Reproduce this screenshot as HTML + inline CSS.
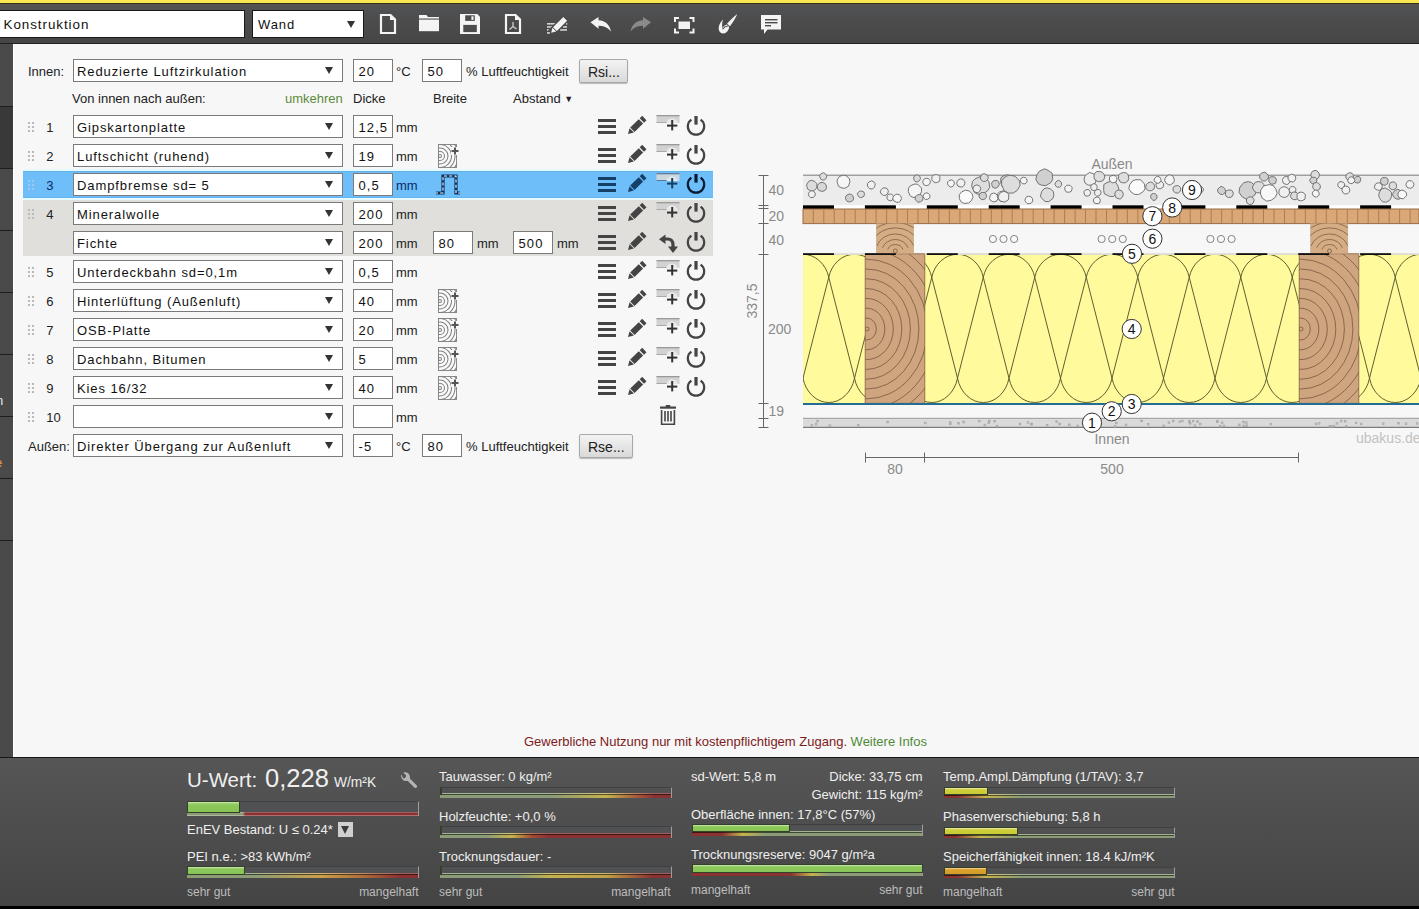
<!DOCTYPE html>
<html><head><meta charset="utf-8"><style>*{box-sizing:border-box}
html,body{margin:0;padding:0}
body{width:1419px;height:909px;overflow:hidden;position:relative;background:#f7f7f7;font-family:"Liberation Sans",sans-serif;font-size:13px;color:#222}
.a{position:absolute}
#yel{left:0;top:0;width:1419px;height:3px;background:#fae650}
#tb{left:0;top:3px;width:1419px;height:41px;background:linear-gradient(#56534f,#4f5053 18%,#4b4b4b 50%,#464646);border-top:1px solid #35321c;border-bottom:1px solid #202020}
#side{left:0;top:44px;width:13px;height:714px;background:#4a4a4a}
.sep{position:absolute;left:0;width:13px;height:1px;background:#1e1e1e}
#content{left:13px;top:44px;width:1406px;height:713px;background:#f7f7f7;border-left:1px solid #fff}
.sel{position:absolute;background:#fff;border:1px solid #7a7a7a;height:23px}
.v{position:absolute;left:3px;top:5px;font-size:13px;letter-spacing:0.9px;color:#111;white-space:nowrap;line-height:14px}
.ar{position:absolute;right:9px;top:7px;width:0;height:0;border-left:4px solid transparent;border-right:4px solid transparent;border-top:7px solid #333}
.inp{position:absolute;background:#fff;border:1px solid #7a7a7a;height:23px;width:40px}
.lbl{position:absolute;white-space:nowrap;line-height:14px;font-size:13px;color:#222}
.btn{position:absolute;height:24px;border:1px solid #a8a8a8;border-radius:2px;background:linear-gradient(#f3f3f3,#d9d9d9);box-shadow:0 1px 1px rgba(0,0,0,.25);font-size:14px;color:#222;line-height:24.5px;padding-left:8px;letter-spacing:0}
.num{position:absolute;font-size:13px;line-height:14px;color:#222}
.drag{position:absolute;left:28px;width:7px;height:11px}
#panel{left:0;top:757px;width:1419px;height:149px;background:linear-gradient(#565656,#444);border-top:1px solid #161616}
#pbot{left:0;top:906px;width:1419px;height:3px;background:#000}
.pt{position:absolute;white-space:nowrap;line-height:14px;font-size:13px;color:#f0f0f0}
.pg{position:absolute;white-space:nowrap;line-height:14px;font-size:12px;color:#bdbdbd}
.ico{position:absolute;overflow:visible}

.inp .v{left:4.5px;letter-spacing:1.1px}
</style></head><body><div id="yel" class="a"></div><div id="tb" class="a"></div><div id="side" class="a"></div><div class="a" style="left:0;top:107px;width:13px;height:61px;background:#393939"></div><div id="content" class="a"></div><div class="sep" style="top:106px"></div><div class="sep" style="top:168px"></div><div class="sep" style="top:230px"></div><div class="sep" style="top:292px"></div><div class="sep" style="top:354px"></div><div class="sep" style="top:416px"></div><div class="sep" style="top:478px"></div><div class="sep" style="top:540px"></div><div class="a" style="left:-4px;top:394px;font-size:13px;line-height:14px;color:#e6e6e6">n</div><div class="a" style="left:-5px;top:456px;font-size:13px;line-height:14px;color:#e39a5a">e</div><div class="a" style="left:-1px;top:10px;width:246px;height:28px;background:#fff;border:1px solid #1a1a1a"><div class="v" style="left:3.5px;top:7px;font-size:13.4px;letter-spacing:0.95px">Konstruktion</div></div><div class="a" style="left:252px;top:10px;width:112px;height:28px;background:#fff;border:1px solid #1a1a1a"><div class="v" style="left:5px;top:7px">Wand</div><div class="ar" style="right:8px;top:10px"></div></div><div class="lbl" style="left:28px;top:65px;">Innen:</div><div class="sel" style="left:73px;top:59px;width:270px;height:23px"><div class="v">Reduzierte Luftzirkulation</div><div class="ar"></div></div><div class="inp" style="left:353px;top:59px;width:40px"><div class="v">20</div></div><div class="lbl" style="left:396px;top:65px;">°C</div><div class="inp" style="left:422px;top:59px;width:40px"><div class="v">50</div></div><div class="lbl" style="left:466px;top:65px;">% Luftfeuchtigkeit</div><div class="btn" style="left:579px;top:59px;width:49px">Rsi...</div><div class="lbl" style="left:72px;top:92px;">Von innen nach außen:</div><div class="lbl" style="left:285px;top:92px;color:#5d8a3c">umkehren</div><div class="lbl" style="left:353px;top:92px;">Dicke</div><div class="lbl" style="left:433px;top:92px;">Breite</div><div class="lbl" style="left:513px;top:92px;">Abstand <span style="font-size:9px;position:relative;top:-1px">&#9660;</span></div><div class="a" style="left:23px;top:169px;width:690px;height:2px;background:#e4faff"></div><div class="a" style="left:23px;top:198px;width:690px;height:2px;background:#e4faff"></div><div class="a" style="left:23px;top:171px;width:690px;height:27px;background:#6dbef9;border-top:1px solid #64b0e6;border-bottom:1px solid #64b4ee"></div><div class="a" style="left:23px;top:200px;width:690px;height:56px;background:#e0dfdb"></div><svg class="drag" style="top:122px" width="7" height="11"><g fill="#bababa"><rect x="0" y="0" width="2" height="2"/><rect x="4" y="0" width="2" height="2"/><rect x="0" y="4" width="2" height="2"/><rect x="4" y="4" width="2" height="2"/><rect x="0" y="8" width="2" height="2"/><rect x="4" y="8" width="2" height="2"/></g></svg><div class="num" style="left:46.3px;top:121px;">1</div><div class="sel" style="left:73px;top:115px;width:270px;height:23px"><div class="v">Gipskartonplatte</div><div class="ar"></div></div><div class="inp" style="left:353px;top:115px;width:40px"><div class="v">12,5</div></div><div class="lbl" style="left:396px;top:121px;">mm</div><svg class="drag" style="top:151px" width="7" height="11"><g fill="#bababa"><rect x="0" y="0" width="2" height="2"/><rect x="4" y="0" width="2" height="2"/><rect x="0" y="4" width="2" height="2"/><rect x="4" y="4" width="2" height="2"/><rect x="0" y="8" width="2" height="2"/><rect x="4" y="8" width="2" height="2"/></g></svg><div class="num" style="left:46.3px;top:150px;">2</div><div class="sel" style="left:73px;top:144px;width:270px;height:23px"><div class="v">Luftschicht (ruhend)</div><div class="ar"></div></div><div class="inp" style="left:353px;top:144px;width:40px"><div class="v">19</div></div><div class="lbl" style="left:396px;top:150px;">mm</div><svg class="drag" style="top:180px" width="7" height="11"><g fill="#9cc9ee"><rect x="0" y="0" width="2" height="2"/><rect x="4" y="0" width="2" height="2"/><rect x="0" y="4" width="2" height="2"/><rect x="4" y="4" width="2" height="2"/><rect x="0" y="8" width="2" height="2"/><rect x="4" y="8" width="2" height="2"/></g></svg><div class="num" style="left:46.3px;top:179px;color:#0a2a6a">3</div><div class="sel" style="left:73px;top:173px;width:270px;height:23px"><div class="v">Dampfbremse sd= 5</div><div class="ar"></div></div><div class="inp" style="left:353px;top:173px;width:40px"><div class="v">0,5</div></div><div class="lbl" style="left:396px;top:179px;color:#0a2a6a">mm</div><svg class="drag" style="top:209px" width="7" height="11"><g fill="#bababa"><rect x="0" y="0" width="2" height="2"/><rect x="4" y="0" width="2" height="2"/><rect x="0" y="4" width="2" height="2"/><rect x="4" y="4" width="2" height="2"/><rect x="0" y="8" width="2" height="2"/><rect x="4" y="8" width="2" height="2"/></g></svg><div class="num" style="left:46.3px;top:208px;">4</div><div class="sel" style="left:73px;top:202px;width:270px;height:23px"><div class="v">Mineralwolle</div><div class="ar"></div></div><div class="inp" style="left:353px;top:202px;width:40px"><div class="v">200</div></div><div class="lbl" style="left:396px;top:208px;">mm</div><div class="sel" style="left:73px;top:231px;width:270px;height:23px"><div class="v">Fichte</div><div class="ar"></div></div><div class="inp" style="left:353px;top:231px;width:40px"><div class="v">200</div></div><div class="lbl" style="left:396px;top:237px;">mm</div><div class="inp" style="left:433px;top:231px;width:40px"><div class="v">80</div></div><div class="lbl" style="left:477px;top:237px;">mm</div><div class="inp" style="left:513px;top:231px;width:40px"><div class="v">500</div></div><div class="lbl" style="left:557px;top:237px;">mm</div><svg class="drag" style="top:267px" width="7" height="11"><g fill="#bababa"><rect x="0" y="0" width="2" height="2"/><rect x="4" y="0" width="2" height="2"/><rect x="0" y="4" width="2" height="2"/><rect x="4" y="4" width="2" height="2"/><rect x="0" y="8" width="2" height="2"/><rect x="4" y="8" width="2" height="2"/></g></svg><div class="num" style="left:46.3px;top:266px;">5</div><div class="sel" style="left:73px;top:260px;width:270px;height:23px"><div class="v">Unterdeckbahn sd=0,1m</div><div class="ar"></div></div><div class="inp" style="left:353px;top:260px;width:40px"><div class="v">0,5</div></div><div class="lbl" style="left:396px;top:266px;">mm</div><svg class="drag" style="top:296px" width="7" height="11"><g fill="#bababa"><rect x="0" y="0" width="2" height="2"/><rect x="4" y="0" width="2" height="2"/><rect x="0" y="4" width="2" height="2"/><rect x="4" y="4" width="2" height="2"/><rect x="0" y="8" width="2" height="2"/><rect x="4" y="8" width="2" height="2"/></g></svg><div class="num" style="left:46.3px;top:295px;">6</div><div class="sel" style="left:73px;top:289px;width:270px;height:23px"><div class="v">Hinterlüftung (Außenluft)</div><div class="ar"></div></div><div class="inp" style="left:353px;top:289px;width:40px"><div class="v">40</div></div><div class="lbl" style="left:396px;top:295px;">mm</div><svg class="drag" style="top:325px" width="7" height="11"><g fill="#bababa"><rect x="0" y="0" width="2" height="2"/><rect x="4" y="0" width="2" height="2"/><rect x="0" y="4" width="2" height="2"/><rect x="4" y="4" width="2" height="2"/><rect x="0" y="8" width="2" height="2"/><rect x="4" y="8" width="2" height="2"/></g></svg><div class="num" style="left:46.3px;top:324px;">7</div><div class="sel" style="left:73px;top:318px;width:270px;height:23px"><div class="v">OSB-Platte</div><div class="ar"></div></div><div class="inp" style="left:353px;top:318px;width:40px"><div class="v">20</div></div><div class="lbl" style="left:396px;top:324px;">mm</div><svg class="drag" style="top:354px" width="7" height="11"><g fill="#bababa"><rect x="0" y="0" width="2" height="2"/><rect x="4" y="0" width="2" height="2"/><rect x="0" y="4" width="2" height="2"/><rect x="4" y="4" width="2" height="2"/><rect x="0" y="8" width="2" height="2"/><rect x="4" y="8" width="2" height="2"/></g></svg><div class="num" style="left:46.3px;top:353px;">8</div><div class="sel" style="left:73px;top:347px;width:270px;height:23px"><div class="v">Dachbahn, Bitumen</div><div class="ar"></div></div><div class="inp" style="left:353px;top:347px;width:40px"><div class="v">5</div></div><div class="lbl" style="left:396px;top:353px;">mm</div><svg class="drag" style="top:383px" width="7" height="11"><g fill="#bababa"><rect x="0" y="0" width="2" height="2"/><rect x="4" y="0" width="2" height="2"/><rect x="0" y="4" width="2" height="2"/><rect x="4" y="4" width="2" height="2"/><rect x="0" y="8" width="2" height="2"/><rect x="4" y="8" width="2" height="2"/></g></svg><div class="num" style="left:46.3px;top:382px;">9</div><div class="sel" style="left:73px;top:376px;width:270px;height:23px"><div class="v">Kies 16/32</div><div class="ar"></div></div><div class="inp" style="left:353px;top:376px;width:40px"><div class="v">40</div></div><div class="lbl" style="left:396px;top:382px;">mm</div><svg class="drag" style="top:412px" width="7" height="11"><g fill="#bababa"><rect x="0" y="0" width="2" height="2"/><rect x="4" y="0" width="2" height="2"/><rect x="0" y="4" width="2" height="2"/><rect x="4" y="4" width="2" height="2"/><rect x="0" y="8" width="2" height="2"/><rect x="4" y="8" width="2" height="2"/></g></svg><div class="num" style="left:46.3px;top:411px;">10</div><div class="sel" style="left:73px;top:405px;width:270px;height:23px"><div class="v"></div><div class="ar"></div></div><div class="inp" style="left:353px;top:405px;width:40px"><div class="v"></div></div><div class="lbl" style="left:396px;top:411px;">mm</div><svg class="a" style="left:0;top:0" width="1419" height="909" viewBox="0 0 1419 909"><path d="M381,15 H390.5 L395,19.5 V33 H381 Z" fill="none" stroke="#f4f4f4" stroke-width="2.2" stroke-linejoin="miter"/><path d="M390,15 V20 H395 Z" fill="#f4f4f4"/><path d="M419,15 H426.5 L428,17 H439 V18.4 H419 Z" fill="#f4f4f4"/><rect x="419" y="19.6" width="20" height="11.6" fill="#f4f4f4"/><path d="M460,14 H477.3 L480,16.8 V34 H460 Z" fill="#f4f4f4"/><rect x="465.2" y="15.3" width="9.6" height="5.6" fill="#4b4b4b"/><rect x="471.4" y="16.3" width="2.1" height="3.6" fill="#f4f4f4"/><rect x="463.3" y="24.9" width="13.5" height="7.2" fill="#4b4b4b"/><path d="M506,15 H515.5 L520,19.5 V33 H506 Z" fill="none" stroke="#f4f4f4" stroke-width="2.2"/><path d="M515,15 V20 H520 Z" fill="#f4f4f4"/><path d="M513,22 V26.5 L509.5,29.5 M513,26.5 L516.5,29" fill="none" stroke="#cfcfcf" stroke-width="1.3"/><rect x="547" y="23.2" width="8" height="1.3" fill="#f4f4f4"/><rect x="547" y="26.299999999999997" width="5" height="1.3" fill="#f4f4f4"/><rect x="547" y="29.299999999999997" width="3.3" height="1.3" fill="#f4f4f4"/><rect x="547" y="32.3" width="3" height="1.3" fill="#f4f4f4"/><rect x="566" y="23.2" width="1.3" height="1.3" fill="#f4f4f4"/><rect x="563" y="26.299999999999997" width="4" height="1.3" fill="#f4f4f4"/><rect x="560" y="29.299999999999997" width="7" height="1.3" fill="#f4f4f4"/><g transform="translate(551.2,32.8) rotate(-45)"><rect x="-0.5" y="-4" width="21" height="8" fill="#4b4b4b"/><polygon points="0,0 4.4,-2.7 4.4,2.7" fill="#f4f4f4"/><rect x="5.3" y="-2.7" width="14.5" height="5.4" fill="#f4f4f4"/></g><path d="M590.5,22.2 L598.5,17 V20.3 C604.5,20.5 609.5,24 611.0,31.5 C607.5,27.5 603.5,25.8 598.5,25.8 V28.8 Z" fill="#f4f4f4"/><g transform="translate(1281.5,0) scale(-1,1)"><path d="M630.5,22.2 L638.5,17 V20.3 C644.5,20.5 649.5,24 651.0,31.5 C647.5,27.5 643.5,25.8 638.5,25.8 V28.8 Z" fill="#8a8a8a"/></g><rect x="678.5" y="21.5" width="11.5" height="7.5" fill="#f4f4f4"/><path d="M679,18.0 H675.0 V22" fill="none" stroke="#f4f4f4" stroke-width="2"/><path d="M689.5,18.0 H693.5 V22" fill="none" stroke="#f4f4f4" stroke-width="2"/><path d="M679,32.5 H675.0 V28.5" fill="none" stroke="#f4f4f4" stroke-width="2"/><path d="M689.5,32.5 H693.5 V28.5" fill="none" stroke="#f4f4f4" stroke-width="2"/><path d="M737.3,14 C735.5,18.5 732.5,22.5 730,26.3 L727,23.8 C730,20.5 733.5,17 737.3,14 Z" fill="#f4f4f4"/><path d="M723.2,19.5 C719.5,22.5 717.5,28 719.5,31.5 C721.5,34.5 726.5,34 728.5,29.5 C729.5,27.5 729,26.3 728,25.5 L726.5,24.5 C724,25.5 722.5,27.5 722.5,29 C722,25.5 721.8,22.5 723.2,19.5 Z" fill="#f4f4f4"/><path d="M722.6,29.2 C724,27.2 726,26.2 728.2,25.8" fill="none" stroke="#4a4a4a" stroke-width="1.1"/><path d="M761,15 H781 V29.5 H767.5 L764,34 V29.5 H761 Z" fill="#f4f4f4"/><rect x="765" y="19" width="12.5" height="1.4" fill="#4a4a4a"/><rect x="765" y="22" width="12.5" height="1.4" fill="#4a4a4a"/><rect x="765" y="25" width="6" height="1.4" fill="#4a4a4a"/><rect x="598" y="119" width="18" height="3" fill="#444"/><rect x="598" y="125" width="18" height="3" fill="#444"/><rect x="598" y="131" width="18" height="3" fill="#444"/><g transform="translate(628,134) rotate(-44.3)"><polygon points="0,0 5.2,-3.1 5.2,3.1" fill="#444"/><rect x="6.1" y="-3.1" width="12" height="6.2" fill="#444"/><rect x="19.4" y="-3.1" width="3.4" height="6.2" fill="#444"/></g><rect x="656.5" y="115" width="23" height="8" fill="#d2d2d2"/><rect x="656.5" y="115" width="23" height="1.3" fill="#9a9a9a"/><path d="M666.5,123 a5.5,4.5 0 0 1 11,0 z" fill="#e9e9e9"/><rect x="656.5" y="122" width="10" height="1" fill="#a8a8a8"/><rect x="667.0" y="124.6" width="10.3" height="2" fill="#333"/><rect x="671.2" y="120" width="2" height="10.4" fill="#333"/><path d="M700.59,119.70 A8.2,8.2 0 1 1 691.41,119.70" fill="none" stroke="#444" stroke-width="2.2"/><rect x="694.4" y="116.0" width="3.2" height="8.6" fill="#444"/><rect x="598" y="148" width="18" height="3" fill="#444"/><rect x="598" y="154" width="18" height="3" fill="#444"/><rect x="598" y="160" width="18" height="3" fill="#444"/><g transform="translate(628,163) rotate(-44.3)"><polygon points="0,0 5.2,-3.1 5.2,3.1" fill="#444"/><rect x="6.1" y="-3.1" width="12" height="6.2" fill="#444"/><rect x="19.4" y="-3.1" width="3.4" height="6.2" fill="#444"/></g><rect x="656.5" y="144" width="23" height="8" fill="#d2d2d2"/><rect x="656.5" y="144" width="23" height="1.3" fill="#9a9a9a"/><path d="M666.5,152 a5.5,4.5 0 0 1 11,0 z" fill="#e9e9e9"/><rect x="656.5" y="151" width="10" height="1" fill="#a8a8a8"/><rect x="667.0" y="153.6" width="10.3" height="2" fill="#333"/><rect x="671.2" y="149" width="2" height="10.4" fill="#333"/><path d="M700.59,148.70 A8.2,8.2 0 1 1 691.41,148.70" fill="none" stroke="#444" stroke-width="2.2"/><rect x="694.4" y="145.0" width="3.2" height="8.6" fill="#444"/><g><clipPath id="tc438144"><rect x="438" y="144" width="19" height="24"/></clipPath><rect x="438.5" y="144.5" width="18" height="23" fill="#fafafa" stroke="#8a8a8a" stroke-width="1"/><g clip-path="url(#tc438144)" fill="none" stroke="#808080" stroke-width="1.05"><circle cx="440" cy="156" r="1.5"/><circle cx="440" cy="156" r="4.5"/><circle cx="440" cy="156" r="8"/><circle cx="440" cy="156" r="11.5"/><circle cx="440" cy="156" r="15"/><circle cx="440" cy="156" r="18.5"/><circle cx="440" cy="156" r="22"/></g><rect x="451" y="147" width="8" height="8" fill="#f7f7f7"/><rect x="451.5" y="150" width="7" height="2" fill="#555"/><rect x="454" y="147.5" width="2" height="7" fill="#555"/></g><rect x="598" y="177" width="18" height="3" fill="#143f66"/><rect x="598" y="183" width="18" height="3" fill="#143f66"/><rect x="598" y="189" width="18" height="3" fill="#143f66"/><g transform="translate(628,192) rotate(-44.3)"><polygon points="0,0 5.2,-3.1 5.2,3.1" fill="#143f66"/><rect x="6.1" y="-3.1" width="12" height="6.2" fill="#143f66"/><rect x="19.4" y="-3.1" width="3.4" height="6.2" fill="#143f66"/></g><rect x="656.5" y="173" width="23" height="8" fill="#cdd6dc"/><rect x="656.5" y="173" width="23" height="1.3" fill="#5b7f9c"/><path d="M666.5,181 a5.5,4.5 0 0 1 11,0 z" fill="#dfe8ee"/><rect x="656.5" y="180" width="10" height="1" fill="#4d7fa6"/><rect x="667.0" y="182.6" width="10.3" height="2" fill="#1b3f60"/><rect x="671.2" y="178" width="2" height="10.4" fill="#1b3f60"/><path d="M700.59,177.70 A8.2,8.2 0 1 1 691.41,177.70" fill="none" stroke="#0a1a33" stroke-width="2.2"/><rect x="694.4" y="174.0" width="3.2" height="8.6" fill="#0a1a33"/><path d="M436,193 H443 V176 H456 V193 H460" fill="none" stroke="#0b3564" stroke-width="3.2"/><path d="M436,193 H443 V176 H456 V193 H460" fill="none" stroke="#f4fbff" stroke-width="1.1" stroke-dasharray="3 2.2" stroke-dashoffset="1"/><rect x="598" y="206" width="18" height="3" fill="#444"/><rect x="598" y="212" width="18" height="3" fill="#444"/><rect x="598" y="218" width="18" height="3" fill="#444"/><g transform="translate(628,221) rotate(-44.3)"><polygon points="0,0 5.2,-3.1 5.2,3.1" fill="#444"/><rect x="6.1" y="-3.1" width="12" height="6.2" fill="#444"/><rect x="19.4" y="-3.1" width="3.4" height="6.2" fill="#444"/></g><rect x="656.5" y="202" width="23" height="8" fill="#d2d2d2"/><rect x="656.5" y="202" width="23" height="1.3" fill="#9a9a9a"/><path d="M666.5,210 a5.5,4.5 0 0 1 11,0 z" fill="#e9e9e9"/><rect x="656.5" y="209" width="10" height="1" fill="#a8a8a8"/><rect x="667.0" y="211.6" width="10.3" height="2" fill="#333"/><rect x="671.2" y="207" width="2" height="10.4" fill="#333"/><path d="M700.59,206.70 A8.2,8.2 0 1 1 691.41,206.70" fill="none" stroke="#444" stroke-width="2.2"/><rect x="694.4" y="203.0" width="3.2" height="8.6" fill="#444"/><rect x="598" y="235" width="18" height="3" fill="#444"/><rect x="598" y="241" width="18" height="3" fill="#444"/><rect x="598" y="247" width="18" height="3" fill="#444"/><g transform="translate(628,250) rotate(-44.3)"><polygon points="0,0 5.2,-3.1 5.2,3.1" fill="#444"/><rect x="6.1" y="-3.1" width="12" height="6.2" fill="#444"/><rect x="19.4" y="-3.1" width="3.4" height="6.2" fill="#444"/></g><path d="M665,239 H667.5 Q673,239 673,245 V248" fill="none" stroke="#444" stroke-width="3.2"/><polygon points="659,239.2 665.5,234.5 665.5,244" fill="#444"/><polygon points="668,246.5 678,246.5 673,253" fill="#444"/><path d="M700.59,235.70 A8.2,8.2 0 1 1 691.41,235.70" fill="none" stroke="#444" stroke-width="2.2"/><rect x="694.4" y="232.0" width="3.2" height="8.6" fill="#444"/><rect x="598" y="264" width="18" height="3" fill="#444"/><rect x="598" y="270" width="18" height="3" fill="#444"/><rect x="598" y="276" width="18" height="3" fill="#444"/><g transform="translate(628,279) rotate(-44.3)"><polygon points="0,0 5.2,-3.1 5.2,3.1" fill="#444"/><rect x="6.1" y="-3.1" width="12" height="6.2" fill="#444"/><rect x="19.4" y="-3.1" width="3.4" height="6.2" fill="#444"/></g><rect x="656.5" y="260" width="23" height="8" fill="#d2d2d2"/><rect x="656.5" y="260" width="23" height="1.3" fill="#9a9a9a"/><path d="M666.5,268 a5.5,4.5 0 0 1 11,0 z" fill="#e9e9e9"/><rect x="656.5" y="267" width="10" height="1" fill="#a8a8a8"/><rect x="667.0" y="269.6" width="10.3" height="2" fill="#333"/><rect x="671.2" y="265" width="2" height="10.4" fill="#333"/><path d="M700.59,264.70 A8.2,8.2 0 1 1 691.41,264.70" fill="none" stroke="#444" stroke-width="2.2"/><rect x="694.4" y="261.0" width="3.2" height="8.6" fill="#444"/><rect x="598" y="293" width="18" height="3" fill="#444"/><rect x="598" y="299" width="18" height="3" fill="#444"/><rect x="598" y="305" width="18" height="3" fill="#444"/><g transform="translate(628,308) rotate(-44.3)"><polygon points="0,0 5.2,-3.1 5.2,3.1" fill="#444"/><rect x="6.1" y="-3.1" width="12" height="6.2" fill="#444"/><rect x="19.4" y="-3.1" width="3.4" height="6.2" fill="#444"/></g><rect x="656.5" y="289" width="23" height="8" fill="#d2d2d2"/><rect x="656.5" y="289" width="23" height="1.3" fill="#9a9a9a"/><path d="M666.5,297 a5.5,4.5 0 0 1 11,0 z" fill="#e9e9e9"/><rect x="656.5" y="296" width="10" height="1" fill="#a8a8a8"/><rect x="667.0" y="298.6" width="10.3" height="2" fill="#333"/><rect x="671.2" y="294" width="2" height="10.4" fill="#333"/><path d="M700.59,293.70 A8.2,8.2 0 1 1 691.41,293.70" fill="none" stroke="#444" stroke-width="2.2"/><rect x="694.4" y="290.0" width="3.2" height="8.6" fill="#444"/><g><clipPath id="tc438289"><rect x="438" y="289" width="19" height="24"/></clipPath><rect x="438.5" y="289.5" width="18" height="23" fill="#fafafa" stroke="#8a8a8a" stroke-width="1"/><g clip-path="url(#tc438289)" fill="none" stroke="#808080" stroke-width="1.05"><circle cx="440" cy="301" r="1.5"/><circle cx="440" cy="301" r="4.5"/><circle cx="440" cy="301" r="8"/><circle cx="440" cy="301" r="11.5"/><circle cx="440" cy="301" r="15"/><circle cx="440" cy="301" r="18.5"/><circle cx="440" cy="301" r="22"/></g><rect x="451" y="292" width="8" height="8" fill="#f7f7f7"/><rect x="451.5" y="295" width="7" height="2" fill="#555"/><rect x="454" y="292.5" width="2" height="7" fill="#555"/></g><rect x="598" y="322" width="18" height="3" fill="#444"/><rect x="598" y="328" width="18" height="3" fill="#444"/><rect x="598" y="334" width="18" height="3" fill="#444"/><g transform="translate(628,337) rotate(-44.3)"><polygon points="0,0 5.2,-3.1 5.2,3.1" fill="#444"/><rect x="6.1" y="-3.1" width="12" height="6.2" fill="#444"/><rect x="19.4" y="-3.1" width="3.4" height="6.2" fill="#444"/></g><rect x="656.5" y="318" width="23" height="8" fill="#d2d2d2"/><rect x="656.5" y="318" width="23" height="1.3" fill="#9a9a9a"/><path d="M666.5,326 a5.5,4.5 0 0 1 11,0 z" fill="#e9e9e9"/><rect x="656.5" y="325" width="10" height="1" fill="#a8a8a8"/><rect x="667.0" y="327.6" width="10.3" height="2" fill="#333"/><rect x="671.2" y="323" width="2" height="10.4" fill="#333"/><path d="M700.59,322.70 A8.2,8.2 0 1 1 691.41,322.70" fill="none" stroke="#444" stroke-width="2.2"/><rect x="694.4" y="319.0" width="3.2" height="8.6" fill="#444"/><g><clipPath id="tc438318"><rect x="438" y="318" width="19" height="24"/></clipPath><rect x="438.5" y="318.5" width="18" height="23" fill="#fafafa" stroke="#8a8a8a" stroke-width="1"/><g clip-path="url(#tc438318)" fill="none" stroke="#808080" stroke-width="1.05"><circle cx="440" cy="330" r="1.5"/><circle cx="440" cy="330" r="4.5"/><circle cx="440" cy="330" r="8"/><circle cx="440" cy="330" r="11.5"/><circle cx="440" cy="330" r="15"/><circle cx="440" cy="330" r="18.5"/><circle cx="440" cy="330" r="22"/></g><rect x="451" y="321" width="8" height="8" fill="#f7f7f7"/><rect x="451.5" y="324" width="7" height="2" fill="#555"/><rect x="454" y="321.5" width="2" height="7" fill="#555"/></g><rect x="598" y="351" width="18" height="3" fill="#444"/><rect x="598" y="357" width="18" height="3" fill="#444"/><rect x="598" y="363" width="18" height="3" fill="#444"/><g transform="translate(628,366) rotate(-44.3)"><polygon points="0,0 5.2,-3.1 5.2,3.1" fill="#444"/><rect x="6.1" y="-3.1" width="12" height="6.2" fill="#444"/><rect x="19.4" y="-3.1" width="3.4" height="6.2" fill="#444"/></g><rect x="656.5" y="347" width="23" height="8" fill="#d2d2d2"/><rect x="656.5" y="347" width="23" height="1.3" fill="#9a9a9a"/><path d="M666.5,355 a5.5,4.5 0 0 1 11,0 z" fill="#e9e9e9"/><rect x="656.5" y="354" width="10" height="1" fill="#a8a8a8"/><rect x="667.0" y="356.6" width="10.3" height="2" fill="#333"/><rect x="671.2" y="352" width="2" height="10.4" fill="#333"/><path d="M700.59,351.70 A8.2,8.2 0 1 1 691.41,351.70" fill="none" stroke="#444" stroke-width="2.2"/><rect x="694.4" y="348.0" width="3.2" height="8.6" fill="#444"/><g><clipPath id="tc438347"><rect x="438" y="347" width="19" height="24"/></clipPath><rect x="438.5" y="347.5" width="18" height="23" fill="#fafafa" stroke="#8a8a8a" stroke-width="1"/><g clip-path="url(#tc438347)" fill="none" stroke="#808080" stroke-width="1.05"><circle cx="440" cy="359" r="1.5"/><circle cx="440" cy="359" r="4.5"/><circle cx="440" cy="359" r="8"/><circle cx="440" cy="359" r="11.5"/><circle cx="440" cy="359" r="15"/><circle cx="440" cy="359" r="18.5"/><circle cx="440" cy="359" r="22"/></g><rect x="451" y="350" width="8" height="8" fill="#f7f7f7"/><rect x="451.5" y="353" width="7" height="2" fill="#555"/><rect x="454" y="350.5" width="2" height="7" fill="#555"/></g><rect x="598" y="380" width="18" height="3" fill="#444"/><rect x="598" y="386" width="18" height="3" fill="#444"/><rect x="598" y="392" width="18" height="3" fill="#444"/><g transform="translate(628,395) rotate(-44.3)"><polygon points="0,0 5.2,-3.1 5.2,3.1" fill="#444"/><rect x="6.1" y="-3.1" width="12" height="6.2" fill="#444"/><rect x="19.4" y="-3.1" width="3.4" height="6.2" fill="#444"/></g><rect x="656.5" y="376" width="23" height="8" fill="#d2d2d2"/><rect x="656.5" y="376" width="23" height="1.3" fill="#9a9a9a"/><path d="M666.5,384 a5.5,4.5 0 0 1 11,0 z" fill="#e9e9e9"/><rect x="656.5" y="383" width="10" height="1" fill="#a8a8a8"/><rect x="667.0" y="385.6" width="10.3" height="2" fill="#333"/><rect x="671.2" y="381" width="2" height="10.4" fill="#333"/><path d="M700.59,380.70 A8.2,8.2 0 1 1 691.41,380.70" fill="none" stroke="#444" stroke-width="2.2"/><rect x="694.4" y="377.0" width="3.2" height="8.6" fill="#444"/><g><clipPath id="tc438376"><rect x="438" y="376" width="19" height="24"/></clipPath><rect x="438.5" y="376.5" width="18" height="23" fill="#fafafa" stroke="#8a8a8a" stroke-width="1"/><g clip-path="url(#tc438376)" fill="none" stroke="#808080" stroke-width="1.05"><circle cx="440" cy="388" r="1.5"/><circle cx="440" cy="388" r="4.5"/><circle cx="440" cy="388" r="8"/><circle cx="440" cy="388" r="11.5"/><circle cx="440" cy="388" r="15"/><circle cx="440" cy="388" r="18.5"/><circle cx="440" cy="388" r="22"/></g><rect x="451" y="379" width="8" height="8" fill="#f7f7f7"/><rect x="451.5" y="382" width="7" height="2" fill="#555"/><rect x="454" y="379.5" width="2" height="7" fill="#555"/></g><rect x="660" y="406.5" width="16" height="2.2" fill="#444"/><rect x="665.5" y="405" width="5" height="2" rx="1" fill="#444"/><path d="M661.6,410 V424.2 H674.4 V410" fill="none" stroke="#444" stroke-width="1.6"/><rect x="664.2" y="411" width="1.6" height="10.5" fill="#444"/><rect x="667.2" y="411" width="1.6" height="10.5" fill="#444"/><rect x="670.2" y="411" width="1.6" height="10.5" fill="#444"/><rect x="803" y="175" width="616" height="30.5" fill="#ececec"/><rect x="803" y="174.6" width="616" height="1.2" fill="#8c8c8c"/><g stroke="#666" stroke-width="0.9"><polygon points="826.7,176.8 825.8,178.8 824.2,179.9 822.6,180.1 820.8,179.2 819.9,177.4 819.7,175.1 821.0,173.8 823.3,172.7 825.1,173.5 826.4,175.4" fill="#dcdcdc"/><polygon points="816.9,186.8 816.0,188.6 813.7,191.0 810.8,191.0 807.7,189.1 806.8,186.5 806.8,184.2 809.0,181.1 811.5,180.3 814.5,181.2 816.9,183.7" fill="#dcdcdc"/><polygon points="826.5,187.2 825.6,190.0 823.0,191.3 820.2,191.0 818.4,190.1 817.4,188.0 817.4,185.5 819.6,182.9 822.2,182.4 824.5,183.1 826.1,185.0" fill="#d8d8d8"/><polygon points="815.3,195.0 814.5,196.4 813.2,197.4 810.7,197.7 809.1,196.2 808.4,194.9 808.5,193.2 809.8,191.6 811.3,190.7 813.3,191.2 815.0,192.6" fill="#f0f0f0"/><polygon points="849.9,181.7 848.6,186.1 844.9,188.3 842.0,188.0 838.5,186.4 837.1,181.9 837.4,179.5 839.4,176.4 843.4,175.2 846.1,175.7 849.3,178.5" fill="#f6f6f6"/><polygon points="853.7,198.9 852.8,200.6 850.6,201.7 848.1,201.9 846.2,200.4 845.6,198.7 845.6,196.6 847.1,194.9 849.2,194.0 851.5,194.5 852.9,195.8" fill="#cfcfcf"/><polygon points="864.4,194.3 864.0,196.2 861.9,197.4 860.3,197.5 858.6,196.5 857.4,194.5 857.8,192.9 858.9,191.7 860.8,190.9 863.0,191.6 864.1,192.3" fill="#dedede"/><polygon points="875.0,185.5 874.1,187.4 872.5,189.0 869.9,188.8 868.6,187.7 867.4,186.0 867.6,183.4 869.1,181.9 871.5,180.9 873.7,181.7 875.1,183.6" fill="#f0f0f0"/><polygon points="888.3,191.8 887.3,193.9 886.0,195.1 883.6,195.5 881.2,193.9 880.3,191.8 881.1,189.7 882.1,188.6 884.0,187.8 886.7,188.2 888.1,190.2" fill="#eeeeee"/><polygon points="893.8,197.9 893.2,199.3 891.0,200.8 889.2,200.5 887.9,199.9 886.8,198.0 887.4,195.6 888.2,194.3 890.4,194.0 891.8,194.4 893.6,196.1" fill="#eeeeee"/><polygon points="901.6,198.5 900.1,201.4 898.6,202.3 896.5,202.2 893.7,200.8 892.8,199.0 893.1,196.6 895.2,194.7 896.9,194.2 899.2,194.5 900.8,196.3" fill="#f5f5f5"/><polygon points="920.5,178.4 919.6,180.4 917.9,181.8 916.0,181.8 914.3,180.6 913.7,178.8 913.9,177.0 914.6,175.6 916.6,174.9 918.9,175.5 919.9,176.7" fill="#dddddd"/><polygon points="930.3,182.5 929.6,184.1 927.8,185.4 925.3,185.5 923.6,184.5 922.8,182.2 923.1,180.4 924.4,178.8 926.4,178.3 928.5,178.6 930.1,180.5" fill="#f5f5f5"/><polygon points="939.9,179.6 939.3,181.5 936.8,182.5 935.2,182.7 933.2,181.6 931.8,179.7 932.0,176.6 933.2,175.2 936.0,174.6 938.6,175.1 939.8,176.4" fill="#f0f0f0"/><polygon points="921.5,191.6 919.6,196.1 917.3,197.2 912.9,197.4 910.1,195.7 908.3,191.6 908.5,188.1 910.3,185.8 914.8,184.0 917.8,184.3 921.5,188.2" fill="#f5f5f5"/><polygon points="922.9,198.4 922.5,200.5 920.4,201.8 918.1,202.3 916.1,200.6 915.1,199.3 915.4,196.6 916.7,195.4 919.2,194.4 920.9,194.6 922.8,196.7" fill="#d0d0d0"/><polygon points="930.1,196.2 929.5,198.1 927.5,199.3 925.5,199.6 924.2,198.4 923.2,196.6 923.4,195.1 924.4,193.6 926.3,192.8 928.4,193.4 929.5,194.7" fill="#f5f5f5"/><polygon points="954.3,183.8 953.7,185.5 951.9,186.9 950.3,187.0 948.3,185.5 947.5,183.8 947.6,182.0 949.0,180.6 951.1,179.8 952.8,180.3 954.3,182.1" fill="#f5f5f5"/><polygon points="964.9,183.4 964.2,185.2 962.6,186.9 960.1,186.9 958.0,186.2 956.7,183.3 957.2,181.6 958.5,179.7 960.5,178.9 963.0,179.2 964.8,181.7" fill="#f0f0f0"/><polygon points="973.0,197.2 971.2,200.9 968.6,203.0 964.0,203.4 961.1,201.8 959.4,198.7 959.3,194.7 961.6,191.9 965.4,190.2 969.5,191.0 972.3,194.2" fill="#fbfbfb"/><polygon points="989.7,187.3 987.4,191.1 982.1,194.0 977.7,194.2 974.5,192.6 971.7,186.3 972.4,181.6 975.0,178.8 980.4,176.5 986.0,178.3 989.0,181.9" fill="#dddddd"/><polygon points="988.3,178.3 987.3,179.8 985.8,181.2 983.6,181.6 981.3,180.2 980.3,178.1 980.9,176.1 982.3,174.1 984.2,173.7 986.4,174.5 987.8,176.2" fill="#dddddd"/><polygon points="980.7,188.8 979.7,191.3 977.9,192.7 975.9,192.4 973.9,191.4 972.9,189.1 973.5,187.1 974.5,185.7 977.1,184.9 978.9,185.6 980.1,186.7" fill="#eeeeee"/><polygon points="986.6,196.7 985.5,198.5 983.9,199.6 981.9,199.5 979.9,198.2 978.9,196.3 979.2,195.0 980.9,192.7 982.7,192.5 984.6,192.6 986.1,194.2" fill="#d0d0d0"/><polygon points="999.3,184.3 998.0,186.9 996.3,188.0 994.0,188.0 992.5,187.1 991.8,184.8 991.6,183.1 993.2,181.0 995.0,180.4 997.4,180.6 998.8,182.0" fill="#d0d0d0"/><polygon points="998.0,198.5 997.0,200.9 994.8,201.8 992.9,201.8 990.2,200.1 989.6,198.4 990.0,196.2 991.0,194.1 993.6,193.0 995.9,193.8 997.7,195.8" fill="#f5f5f5"/><polygon points="1008.5,196.6 1006.7,200.2 1004.2,201.7 1000.7,201.2 998.7,199.3 997.3,196.7 997.7,193.6 999.6,191.9 1003.2,190.9 1005.5,191.5 1007.7,193.4" fill="#eeeeee"/><polygon points="1013.7,182.9 1012.2,185.8 1009.1,187.8 1006.0,187.8 1002.2,186.5 1000.7,182.4 1000.9,177.7 1003.5,175.9 1006.6,174.8 1010.4,175.6 1013.0,178.0" fill="#d0d0d0"/><polygon points="1020.1,185.6 1017.1,190.5 1013.4,193.0 1008.3,193.1 1004.4,191.0 1001.5,184.6 1001.7,180.4 1006.1,176.3 1009.7,175.2 1015.1,176.2 1019.6,181.0" fill="#dddddd"/><polygon points="1008.7,197.9 1008.3,199.8 1004.8,202.1 1002.3,201.6 999.6,200.7 998.1,197.2 999.2,194.2 1000.4,192.8 1003.6,191.3 1007.1,192.4 1008.8,194.6" fill="#f0f0f0"/><polygon points="1027.1,180.9 1026.7,182.4 1025.0,183.9 1022.7,183.7 1021.4,182.9 1020.2,180.9 1020.6,179.5 1021.8,177.6 1023.5,177.2 1025.5,177.8 1026.7,178.9" fill="#f5f5f5"/><polygon points="1032.8,200.9 1031.6,202.8 1030.3,203.5 1027.4,203.7 1026.3,202.6 1024.9,200.6 1025.4,198.6 1026.8,196.5 1028.6,196.3 1030.8,196.6 1032.4,198.5" fill="#f5f5f5"/><polygon points="1052.8,179.3 1050.6,182.8 1045.9,185.6 1041.7,185.2 1038.4,183.8 1035.8,179.4 1037.1,174.4 1039.4,171.1 1044.6,168.8 1048.1,170.3 1052.1,173.2" fill="#d0d0d0"/><polygon points="1053.9,194.8 1053.0,198.3 1048.9,201.6 1045.1,201.5 1041.9,198.5 1040.4,196.3 1041.6,191.7 1043.9,188.8 1047.1,187.9 1050.3,188.9 1053.3,191.4" fill="#dddddd"/><polygon points="1061.7,184.7 1060.8,186.3 1059.7,187.3 1057.3,187.1 1056.2,186.5 1055.0,184.6 1055.3,182.8 1057.0,181.0 1058.4,180.3 1060.4,181.3 1061.2,182.2" fill="#dddddd"/><polygon points="1071.9,189.5 1071.2,191.4 1069.6,192.1 1067.0,192.2 1065.7,191.4 1064.9,189.4 1064.7,187.6 1066.6,185.4 1068.7,185.2 1070.1,185.4 1072.1,187.4" fill="#f5f5f5"/><polygon points="1096.4,179.6 1095.3,183.0 1091.5,185.0 1088.1,185.2 1085.1,183.0 1084.1,179.8 1084.5,176.8 1087.3,173.8 1089.7,172.5 1093.1,173.7 1095.7,175.6" fill="#eeeeee"/><polygon points="1104.9,177.0 1103.2,180.6 1101.0,181.3 1098.3,181.8 1095.0,179.9 1094.0,177.7 1094.2,174.2 1096.4,171.6 1099.3,171.4 1102.3,172.3 1104.0,174.3" fill="#dddddd"/><polygon points="1097.2,187.8 1096.7,189.2 1095.4,190.5 1093.0,190.4 1091.4,189.7 1090.7,187.7 1090.9,185.6 1092.5,184.3 1093.9,183.6 1096.1,184.3 1096.8,185.4" fill="#eeeeee"/><polygon points="1090.6,192.9 1089.7,195.3 1088.0,196.1 1086.1,196.0 1084.8,195.3 1084.0,193.0 1084.1,191.3 1085.2,190.1 1086.9,189.5 1088.9,189.7 1090.3,191.5" fill="#f0f0f0"/><polygon points="1101.1,192.8 1100.1,195.0 1098.8,195.9 1096.5,196.1 1095.5,195.2 1094.3,193.4 1094.8,191.4 1095.5,190.1 1097.6,189.5 1099.5,189.6 1100.7,191.2" fill="#eeeeee"/><polygon points="1100.3,200.8 1099.5,203.1 1098.0,203.6 1095.8,203.6 1094.5,203.2 1093.4,201.1 1093.6,199.1 1095.0,197.8 1096.4,197.1 1098.9,197.5 1099.9,198.7" fill="#f5f5f5"/><polygon points="1118.8,189.4 1117.3,193.1 1113.4,196.6 1109.7,196.4 1104.4,193.8 1103.7,190.5 1103.8,184.6 1106.9,182.6 1111.7,181.0 1115.8,182.4 1118.0,186.0" fill="#dddddd"/><polygon points="1116.9,179.7 1116.4,181.5 1114.0,182.7 1112.4,182.8 1110.3,181.6 1109.5,180.0 1109.5,177.1 1110.6,176.0 1113.4,175.3 1115.4,176.0 1116.8,177.4" fill="#f5f5f5"/><polygon points="1128.8,178.4 1127.8,181.0 1125.3,182.8 1122.3,182.8 1120.0,181.7 1118.5,178.4 1118.6,175.0 1120.7,173.3 1123.5,172.5 1126.0,172.8 1128.2,174.8" fill="#dddddd"/><polygon points="1123.2,195.1 1122.2,197.4 1120.2,199.0 1118.0,198.6 1115.9,197.5 1114.9,194.8 1115.0,192.4 1116.8,190.7 1118.7,190.0 1121.5,190.6 1123.1,193.2" fill="#dddddd"/><polygon points="1145.0,188.8 1143.3,191.5 1138.7,194.5 1134.2,194.3 1130.9,191.8 1128.8,188.5 1129.7,184.7 1132.7,180.8 1135.9,179.7 1140.6,179.8 1144.5,184.0" fill="#fbfbfb"/><polygon points="1154.8,186.7 1153.9,189.0 1151.4,190.7 1148.6,190.7 1146.7,189.5 1145.7,187.7 1146.3,184.6 1148.1,182.8 1150.7,182.1 1152.5,182.5 1154.0,184.6" fill="#dddddd"/><polygon points="1157.1,197.4 1156.3,199.1 1154.9,200.3 1152.9,200.2 1151.6,199.1 1150.7,197.7 1150.8,195.4 1151.9,193.8 1153.5,193.5 1155.7,194.1 1156.7,195.0" fill="#d0d0d0"/><polygon points="1163.7,185.1 1163.0,187.3 1160.8,188.6 1158.6,188.7 1157.0,188.0 1156.1,185.8 1156.0,183.8 1157.9,181.4 1159.6,181.2 1161.5,181.4 1163.3,183.4" fill="#eeeeee"/><polygon points="1161.0,180.3 1160.0,182.3 1158.9,183.2 1157.1,183.2 1155.2,182.1 1154.2,180.7 1154.3,178.8 1156.1,176.9 1157.3,176.3 1159.4,176.8 1160.7,178.6" fill="#f5f5f5"/><polygon points="1174.3,180.2 1173.8,182.6 1170.7,184.7 1168.8,184.9 1165.7,182.8 1164.7,180.3 1165.1,178.2 1166.7,176.1 1169.2,174.8 1172.4,175.6 1173.9,178.0" fill="#f5f5f5"/><polygon points="1180.7,189.9 1179.6,192.1 1178.2,193.1 1175.4,192.9 1173.8,191.6 1173.1,190.2 1173.1,187.5 1174.9,186.1 1177.1,185.6 1178.7,185.8 1180.5,187.8" fill="#dddddd"/><polygon points="1225.7,191.2 1224.8,193.1 1222.6,194.5 1220.6,194.4 1218.7,193.0 1217.7,191.4 1217.7,189.3 1219.3,187.6 1221.1,186.4 1223.4,187.2 1224.7,188.5" fill="#d0d0d0"/><polygon points="1233.2,194.3 1232.3,196.3 1230.9,197.2 1228.4,197.6 1226.0,196.1 1225.4,194.7 1225.7,191.6 1226.9,190.7 1228.9,189.9 1231.7,190.3 1233.0,192.0" fill="#dddddd"/><polygon points="1256.3,191.9 1254.7,195.2 1249.8,198.8 1245.9,199.0 1242.2,196.9 1239.0,192.4 1239.8,187.3 1243.8,182.6 1248.4,181.6 1251.5,182.6 1256.0,186.4" fill="#d0d0d0"/><polygon points="1264.6,187.9 1262.9,191.1 1259.8,192.9 1256.7,192.7 1254.9,191.7 1252.4,188.0 1253.0,185.7 1255.2,182.3 1258.0,181.6 1261.6,182.1 1264.0,184.4" fill="#dddddd"/><polygon points="1254.0,200.8 1253.1,203.2 1251.8,204.2 1249.5,204.5 1247.1,203.1 1246.4,201.0 1246.6,199.0 1248.4,197.2 1250.5,196.8 1252.0,197.1 1253.9,199.2" fill="#dddddd"/><polygon points="1268.6,177.0 1267.5,179.2 1265.3,181.0 1262.5,180.8 1260.9,179.6 1259.5,177.7 1259.9,174.6 1261.3,173.2 1264.2,172.2 1265.9,172.7 1268.0,175.1" fill="#d0d0d0"/><polygon points="1276.3,180.6 1275.5,183.2 1273.9,183.9 1271.7,184.2 1269.7,182.9 1268.8,181.2 1269.0,178.4 1269.9,177.2 1272.0,176.6 1275.0,177.2 1276.1,178.9" fill="#d0d0d0"/><polygon points="1277.2,193.2 1275.3,197.3 1271.3,200.2 1266.6,201.2 1262.2,198.1 1260.5,193.9 1260.7,190.1 1263.8,185.8 1269.4,184.6 1273.3,185.6 1275.9,189.2" fill="#f8f8f8"/><polygon points="1289.6,193.0 1288.1,195.8 1285.3,197.4 1282.5,197.1 1280.2,195.8 1278.9,193.4 1279.2,189.4 1281.3,187.6 1283.9,186.6 1287.0,187.6 1289.3,189.8" fill="#f0f0f0"/><polygon points="1290.4,180.6 1289.2,183.1 1287.6,184.4 1285.8,184.3 1283.6,183.4 1282.5,180.6 1282.6,179.2 1284.2,177.0 1286.3,176.4 1288.7,177.2 1290.1,178.5" fill="#f0f0f0"/><polygon points="1295.8,178.3 1295.0,180.6 1293.4,181.9 1290.9,181.7 1289.1,180.8 1288.1,179.2 1288.1,176.6 1289.6,175.0 1291.5,174.1 1294.2,175.0 1295.3,176.1" fill="#f0f0f0"/><polygon points="1295.9,190.0 1295.5,191.7 1293.4,193.1 1291.7,193.0 1290.1,192.3 1289.2,190.4 1289.5,188.0 1290.7,186.9 1292.6,186.4 1294.6,187.0 1295.7,188.5" fill="#eeeeee"/><polygon points="1298.3,196.3 1297.4,198.3 1296.2,199.6 1293.7,199.6 1291.7,198.7 1290.6,196.6 1291.0,194.2 1292.6,192.3 1294.0,191.9 1297.0,192.7 1298.0,193.8" fill="#dddddd"/><polygon points="1305.2,197.3 1305.0,199.1 1302.2,200.7 1300.4,200.8 1297.9,199.9 1297.0,197.4 1297.1,194.4 1298.2,193.0 1301.1,192.0 1303.7,192.8 1305.4,194.9" fill="#f0f0f0"/><polygon points="1319.5,175.2 1318.5,177.9 1316.4,179.4 1313.8,179.1 1312.1,178.0 1310.9,175.7 1311.1,173.3 1312.5,171.3 1315.0,170.4 1316.9,170.8 1319.0,173.1" fill="#dddddd"/><polygon points="1316.9,181.0 1316.1,182.5 1314.0,183.6 1312.4,183.7 1311.1,183.0 1309.8,180.8 1310.0,179.1 1311.5,177.5 1313.7,177.2 1315.4,177.5 1316.6,178.7" fill="#d0d0d0"/><polygon points="1320.4,187.0 1319.6,189.2 1317.9,190.2 1315.5,190.4 1313.5,188.9 1312.6,186.9 1313.0,185.1 1314.2,183.1 1316.6,182.5 1318.4,183.3 1320.0,184.7" fill="#dddddd"/><polygon points="1319.3,194.2 1318.7,195.5 1316.5,197.0 1315.3,196.9 1313.6,196.1 1312.3,193.8 1312.6,192.1 1314.2,190.5 1315.8,190.1 1317.8,190.7 1318.8,192.3" fill="#f5f5f5"/><polygon points="1353.5,177.2 1352.4,179.2 1351.1,180.0 1348.3,180.5 1346.7,179.1 1345.7,176.9 1346.2,175.0 1347.4,173.5 1349.5,172.7 1352.0,173.2 1353.1,174.5" fill="#dddddd"/><polygon points="1360.7,179.7 1359.9,182.1 1358.1,183.0 1356.9,183.0 1354.7,182.1 1354.0,179.8 1354.4,178.5 1355.7,176.9 1357.1,176.5 1358.9,176.5 1360.5,177.8" fill="#d0d0d0"/><polygon points="1354.9,180.5 1354.0,182.2 1352.1,183.6 1350.2,183.5 1348.9,183.0 1347.7,180.8 1348.4,178.9 1349.4,177.4 1351.2,176.8 1353.0,177.2 1354.3,179.2" fill="#f5f5f5"/><polygon points="1344.7,185.0 1343.5,187.3 1342.4,188.3 1340.5,188.5 1338.8,187.2 1337.8,185.7 1338.0,183.7 1339.0,182.2 1341.0,181.5 1343.1,182.2 1344.4,183.4" fill="#eeeeee"/><polygon points="1349.8,190.9 1348.8,192.5 1347.6,193.8 1344.6,193.9 1343.1,192.8 1341.8,190.2 1342.4,188.4 1343.6,186.6 1345.7,186.0 1348.1,186.6 1349.5,188.6" fill="#f0f0f0"/><polygon points="1388.2,181.2 1387.5,183.7 1385.3,185.2 1383.8,185.2 1381.1,183.7 1380.6,181.7 1380.8,179.3 1382.3,177.7 1384.2,177.5 1386.6,177.8 1387.9,179.2" fill="#d0d0d0"/><polygon points="1396.6,186.7 1395.9,188.4 1394.1,189.4 1392.1,189.8 1389.8,188.2 1389.0,186.9 1389.5,184.1 1390.7,182.3 1393.2,181.9 1395.0,182.4 1396.2,183.9" fill="#dddddd"/><polygon points="1382.3,186.8 1381.4,189.0 1379.6,190.3 1377.6,190.2 1375.1,188.8 1374.4,187.6 1375.0,184.9 1376.2,183.4 1378.3,182.9 1380.1,182.8 1382.0,185.2" fill="#f0f0f0"/><polygon points="1391.8,196.0 1390.1,199.8 1386.6,202.1 1382.7,201.9 1380.7,199.7 1378.8,196.6 1379.0,193.1 1381.3,189.1 1385.0,187.9 1389.2,190.0 1391.4,192.3" fill="#dddddd"/><polygon points="1402.8,194.5 1401.6,197.2 1399.0,199.3 1396.1,198.9 1394.1,197.5 1392.4,194.5 1393.2,192.8 1394.7,190.5 1398.0,189.2 1400.4,190.6 1402.3,192.5" fill="#d0d0d0"/><polygon points="1406.8,195.1 1405.7,196.6 1403.3,198.8 1400.9,198.4 1398.7,197.3 1398.0,195.4 1398.2,192.9 1399.8,190.8 1401.8,190.1 1404.5,190.9 1406.1,192.7" fill="#fbfbfb"/><polygon points="1414.0,184.3 1413.2,186.7 1410.8,188.3 1409.2,188.1 1407.1,187.4 1405.9,184.6 1406.4,182.8 1408.0,180.9 1410.0,180.6 1411.6,181.0 1413.5,182.8" fill="#f5f5f5"/><polygon points="1203.6,189.8 1202.7,191.7 1201.3,192.8 1198.8,192.9 1197.6,192.2 1196.5,190.4 1196.5,188.6 1197.7,186.9 1200.1,186.4 1201.7,186.8 1202.9,188.1" fill="#eeeeee"/></g><rect x="803" y="205.3" width="616" height="3.7" fill="#ffffff"/><rect x="803.0" y="205.3" width="31.0" height="3.7" fill="#000"/><rect x="864.9" y="205.3" width="31.0" height="3.7" fill="#000"/><rect x="926.8" y="205.3" width="31.0" height="3.7" fill="#000"/><rect x="988.7" y="205.3" width="31.0" height="3.7" fill="#000"/><rect x="1050.6" y="205.3" width="31.0" height="3.7" fill="#000"/><rect x="1112.5" y="205.3" width="31.0" height="3.7" fill="#000"/><rect x="1174.4" y="205.3" width="31.0" height="3.7" fill="#000"/><rect x="1236.3" y="205.3" width="31.0" height="3.7" fill="#000"/><rect x="1298.2" y="205.3" width="31.0" height="3.7" fill="#000"/><rect x="1360.1" y="205.3" width="31.0" height="3.7" fill="#000"/><rect x="803" y="209" width="616" height="14.6" fill="#daa777" stroke="#9a6c45" stroke-width="1"/><g stroke="#9a6c45" stroke-width="0.7"><line x1="813.3" y1="209.5" x2="813.3" y2="223.5"/><line x1="823.8" y1="209.5" x2="823.8" y2="223.5"/><line x1="834.2" y1="209.5" x2="834.2" y2="223.5"/><line x1="844.7" y1="209.5" x2="844.7" y2="223.5"/><line x1="855.2" y1="209.5" x2="855.2" y2="223.5"/><line x1="865.7" y1="209.5" x2="865.7" y2="223.5"/><line x1="876.1" y1="209.5" x2="876.1" y2="223.5"/><line x1="886.6" y1="209.5" x2="886.6" y2="223.5"/><line x1="897.1" y1="209.5" x2="897.1" y2="223.5"/><line x1="907.5" y1="209.5" x2="907.5" y2="223.5"/><line x1="918.0" y1="209.5" x2="918.0" y2="223.5"/><line x1="928.5" y1="209.5" x2="928.5" y2="223.5"/><line x1="938.9" y1="209.5" x2="938.9" y2="223.5"/><line x1="949.4" y1="209.5" x2="949.4" y2="223.5"/><line x1="959.9" y1="209.5" x2="959.9" y2="223.5"/><line x1="970.4" y1="209.5" x2="970.4" y2="223.5"/><line x1="980.8" y1="209.5" x2="980.8" y2="223.5"/><line x1="991.3" y1="209.5" x2="991.3" y2="223.5"/><line x1="1001.8" y1="209.5" x2="1001.8" y2="223.5"/><line x1="1012.2" y1="209.5" x2="1012.2" y2="223.5"/><line x1="1022.7" y1="209.5" x2="1022.7" y2="223.5"/><line x1="1033.2" y1="209.5" x2="1033.2" y2="223.5"/><line x1="1043.6" y1="209.5" x2="1043.6" y2="223.5"/><line x1="1054.1" y1="209.5" x2="1054.1" y2="223.5"/><line x1="1064.6" y1="209.5" x2="1064.6" y2="223.5"/><line x1="1075.1" y1="209.5" x2="1075.1" y2="223.5"/><line x1="1085.5" y1="209.5" x2="1085.5" y2="223.5"/><line x1="1096.0" y1="209.5" x2="1096.0" y2="223.5"/><line x1="1106.5" y1="209.5" x2="1106.5" y2="223.5"/><line x1="1116.9" y1="209.5" x2="1116.9" y2="223.5"/><line x1="1127.4" y1="209.5" x2="1127.4" y2="223.5"/><line x1="1137.9" y1="209.5" x2="1137.9" y2="223.5"/><line x1="1148.3" y1="209.5" x2="1148.3" y2="223.5"/><line x1="1158.8" y1="209.5" x2="1158.8" y2="223.5"/><line x1="1169.3" y1="209.5" x2="1169.3" y2="223.5"/><line x1="1179.8" y1="209.5" x2="1179.8" y2="223.5"/><line x1="1190.2" y1="209.5" x2="1190.2" y2="223.5"/><line x1="1200.7" y1="209.5" x2="1200.7" y2="223.5"/><line x1="1211.2" y1="209.5" x2="1211.2" y2="223.5"/><line x1="1221.6" y1="209.5" x2="1221.6" y2="223.5"/><line x1="1232.1" y1="209.5" x2="1232.1" y2="223.5"/><line x1="1242.6" y1="209.5" x2="1242.6" y2="223.5"/><line x1="1253.0" y1="209.5" x2="1253.0" y2="223.5"/><line x1="1263.5" y1="209.5" x2="1263.5" y2="223.5"/><line x1="1274.0" y1="209.5" x2="1274.0" y2="223.5"/><line x1="1284.5" y1="209.5" x2="1284.5" y2="223.5"/><line x1="1294.9" y1="209.5" x2="1294.9" y2="223.5"/><line x1="1305.4" y1="209.5" x2="1305.4" y2="223.5"/><line x1="1315.9" y1="209.5" x2="1315.9" y2="223.5"/><line x1="1326.3" y1="209.5" x2="1326.3" y2="223.5"/><line x1="1336.8" y1="209.5" x2="1336.8" y2="223.5"/><line x1="1347.3" y1="209.5" x2="1347.3" y2="223.5"/><line x1="1357.7" y1="209.5" x2="1357.7" y2="223.5"/><line x1="1368.2" y1="209.5" x2="1368.2" y2="223.5"/><line x1="1378.7" y1="209.5" x2="1378.7" y2="223.5"/><line x1="1389.2" y1="209.5" x2="1389.2" y2="223.5"/><line x1="1399.6" y1="209.5" x2="1399.6" y2="223.5"/><line x1="1410.1" y1="209.5" x2="1410.1" y2="223.5"/></g><rect x="803" y="254" width="616" height="149.5" fill="#fffa9c"/><clipPath id="insclip"><rect x="803" y="254" width="616" height="149.5"/></clipPath><path clip-path="url(#insclip)" d="M725.75,277.3 A26.5,30.1 0 0 1 777.25,277.3 M751.50,378.2 A26.5,31.8 0 0 0 803.00,378.2 M777.25,277.3 L803.00,378.2 M777.25,277.3 L751.50,378.2 M777.25,277.3 A26.5,30.1 0 0 1 828.75,277.3 M803.00,378.2 A26.5,31.8 0 0 0 854.50,378.2 M828.75,277.3 L854.50,378.2 M828.75,277.3 L803.00,378.2 M828.75,277.3 A26.5,30.1 0 0 1 880.25,277.3 M854.50,378.2 A26.5,31.8 0 0 0 906.00,378.2 M880.25,277.3 L906.00,378.2 M880.25,277.3 L854.50,378.2 M880.25,277.3 A26.5,30.1 0 0 1 931.75,277.3 M906.00,378.2 A26.5,31.8 0 0 0 957.50,378.2 M931.75,277.3 L957.50,378.2 M931.75,277.3 L906.00,378.2 M931.75,277.3 A26.5,30.1 0 0 1 983.25,277.3 M957.50,378.2 A26.5,31.8 0 0 0 1009.00,378.2 M983.25,277.3 L1009.00,378.2 M983.25,277.3 L957.50,378.2 M983.25,277.3 A26.5,30.1 0 0 1 1034.75,277.3 M1009.00,378.2 A26.5,31.8 0 0 0 1060.50,378.2 M1034.75,277.3 L1060.50,378.2 M1034.75,277.3 L1009.00,378.2 M1034.75,277.3 A26.5,30.1 0 0 1 1086.25,277.3 M1060.50,378.2 A26.5,31.8 0 0 0 1112.00,378.2 M1086.25,277.3 L1112.00,378.2 M1086.25,277.3 L1060.50,378.2 M1086.25,277.3 A26.5,30.1 0 0 1 1137.75,277.3 M1112.00,378.2 A26.5,31.8 0 0 0 1163.50,378.2 M1137.75,277.3 L1163.50,378.2 M1137.75,277.3 L1112.00,378.2 M1137.75,277.3 A26.5,30.1 0 0 1 1189.25,277.3 M1163.50,378.2 A26.5,31.8 0 0 0 1215.00,378.2 M1189.25,277.3 L1215.00,378.2 M1189.25,277.3 L1163.50,378.2 M1189.25,277.3 A26.5,30.1 0 0 1 1240.75,277.3 M1215.00,378.2 A26.5,31.8 0 0 0 1266.50,378.2 M1240.75,277.3 L1266.50,378.2 M1240.75,277.3 L1215.00,378.2 M1240.75,277.3 A26.5,30.1 0 0 1 1292.25,277.3 M1266.50,378.2 A26.5,31.8 0 0 0 1318.00,378.2 M1292.25,277.3 L1318.00,378.2 M1292.25,277.3 L1266.50,378.2 M1292.25,277.3 A26.5,30.1 0 0 1 1343.75,277.3 M1318.00,378.2 A26.5,31.8 0 0 0 1369.50,378.2 M1343.75,277.3 L1369.50,378.2 M1343.75,277.3 L1318.00,378.2 M1343.75,277.3 A26.5,30.1 0 0 1 1395.25,277.3 M1369.50,378.2 A26.5,31.8 0 0 0 1421.00,378.2 M1395.25,277.3 L1421.00,378.2 M1395.25,277.3 L1369.50,378.2 M1395.25,277.3 A26.5,30.1 0 0 1 1446.75,277.3 M1421.00,378.2 A26.5,31.8 0 0 0 1472.50,378.2 M1446.75,277.3 L1472.50,378.2 M1446.75,277.3 L1421.00,378.2" fill="none" stroke="#58562a" stroke-width="0.95"/><clipPath id="raf865"><rect x="865.2" y="254" width="59.6" height="149.5"/></clipPath><rect x="865.2" y="253.8" width="59.6" height="149.5" fill="#cfa57f" stroke="#8a6a4a" stroke-width="0.9"/><g clip-path="url(#raf865)" fill="none" stroke="#6a4e36" stroke-width="0.7"><circle cx="867.0" cy="329" r="2"/><ellipse cx="866.7" cy="329" rx="9.6" ry="11.0"/><ellipse cx="866.7" cy="329" rx="18.1" ry="20.8"/><ellipse cx="866.7" cy="329" rx="26.6" ry="30.6"/><ellipse cx="866.7" cy="329" rx="35.1" ry="40.4"/><ellipse cx="866.7" cy="329" rx="43.7" ry="50.2"/><ellipse cx="866.7" cy="329" rx="52.2" ry="60.0"/><ellipse cx="866.7" cy="329" rx="60.7" ry="69.8"/><ellipse cx="866.7" cy="329" rx="69.3" ry="79.6"/><ellipse cx="866.7" cy="329" rx="77.8" ry="89.4"/></g><clipPath id="raf1299"><rect x="1299.2" y="254" width="59.6" height="149.5"/></clipPath><rect x="1299.2" y="253.8" width="59.6" height="149.5" fill="#cfa57f" stroke="#8a6a4a" stroke-width="0.9"/><g clip-path="url(#raf1299)" fill="none" stroke="#6a4e36" stroke-width="0.7"><circle cx="1301.0" cy="329" r="2"/><ellipse cx="1300.7" cy="329" rx="9.6" ry="11.0"/><ellipse cx="1300.7" cy="329" rx="18.1" ry="20.8"/><ellipse cx="1300.7" cy="329" rx="26.6" ry="30.6"/><ellipse cx="1300.7" cy="329" rx="35.1" ry="40.4"/><ellipse cx="1300.7" cy="329" rx="43.7" ry="50.2"/><ellipse cx="1300.7" cy="329" rx="52.2" ry="60.0"/><ellipse cx="1300.7" cy="329" rx="60.7" ry="69.8"/><ellipse cx="1300.7" cy="329" rx="69.3" ry="79.6"/><ellipse cx="1300.7" cy="329" rx="77.8" ry="89.4"/></g><clipPath id="bat876"><rect x="876.4" y="223.6" width="37.2" height="29.6"/></clipPath><rect x="876.4" y="223.6" width="37.2" height="29.8" fill="#d5ad85" stroke="#c09a74" stroke-width="0.5"/><g clip-path="url(#bat876)" fill="none" stroke="#6e5238" stroke-width="0.7"><circle cx="895.3" cy="251" r="2"/><path d="M887.7,249.5 A8,7.2 0 0 1 902.9,249.5"/><path d="M882.5,247.8 A13.5,12.2 0 0 1 908.1,247.8"/><path d="M876.8,246.0 A19.5,17.6 0 0 1 913.8,246.0"/><path d="M872.8,240.0 A25.5,22.9 0 0 1 917.8,240.0"/><path d="M869.6,234.7 A31,27.9 0 0 1 921.0,234.7"/></g><clipPath id="bat1310"><rect x="1310.6" y="223.6" width="37.2" height="29.6"/></clipPath><rect x="1310.6" y="223.6" width="37.2" height="29.8" fill="#d5ad85" stroke="#c09a74" stroke-width="0.5"/><g clip-path="url(#bat1310)" fill="none" stroke="#6e5238" stroke-width="0.7"><circle cx="1329.5" cy="251" r="2"/><path d="M1321.9,249.5 A8,7.2 0 0 1 1337.1,249.5"/><path d="M1316.7,247.8 A13.5,12.2 0 0 1 1342.3,247.8"/><path d="M1311.0,246.0 A19.5,17.6 0 0 1 1348.0,246.0"/><path d="M1307.0,240.0 A25.5,22.9 0 0 1 1352.0,240.0"/><path d="M1303.8,234.7 A31,27.9 0 0 1 1355.2,234.7"/></g><rect x="803" y="253.2" width="62.200000000000045" height="1.8" fill="#dcdccc"/><rect x="924.8" y="253.2" width="374.4000000000001" height="1.8" fill="#dcdccc"/><rect x="1358.8" y="253.2" width="60.200000000000045" height="1.8" fill="#dcdccc"/><rect x="803.0" y="253.2" width="31.0" height="1.8" fill="#111"/><rect x="864.9" y="253.2" width="31.0" height="1.8" fill="#111"/><rect x="926.8" y="253.2" width="31.0" height="1.8" fill="#111"/><rect x="988.7" y="253.2" width="31.0" height="1.8" fill="#111"/><rect x="1050.6" y="253.2" width="31.0" height="1.8" fill="#111"/><rect x="1112.5" y="253.2" width="31.0" height="1.8" fill="#111"/><rect x="1174.4" y="253.2" width="31.0" height="1.8" fill="#111"/><rect x="1236.3" y="253.2" width="31.0" height="1.8" fill="#111"/><rect x="1298.2" y="253.2" width="31.0" height="1.8" fill="#111"/><rect x="1360.1" y="253.2" width="31.0" height="1.8" fill="#111"/><rect x="803" y="403" width="616" height="2" fill="#226e93"/><rect x="803" y="418.3" width="616" height="9" fill="#dadada"/><rect x="803" y="417.8" width="616" height="1" fill="#9a9a9a"/><rect x="803" y="426.8" width="616" height="1.1" fill="#6e6e6e"/><g fill="none" stroke="#a8a8a8" stroke-width="0.8"><rect x="949.6" y="423.0" width="1.6" height="1.6"/><rect x="1030.9" y="423.3" width="1.6" height="1.6"/><rect x="1188.4" y="420.4" width="1.6" height="1.6"/><rect x="811.1" y="424.6" width="1.6" height="1.6"/><rect x="962.8" y="421.3" width="1.6" height="1.6"/><rect x="1416.3" y="422.6" width="1.6" height="1.6"/><rect x="1318.3" y="422.6" width="1.6" height="1.6"/><rect x="1196.7" y="420.8" width="1.6" height="1.6"/><rect x="1194.1" y="424.8" width="1.6" height="1.6"/><rect x="1125.3" y="424.1" width="1.6" height="1.6"/><rect x="1216.6" y="420.4" width="1.6" height="1.6"/><rect x="1270.1" y="423.3" width="1.6" height="1.6"/><rect x="988.6" y="420.2" width="1.6" height="1.6"/><rect x="1336.2" y="422.6" width="1.6" height="1.6"/><rect x="1245.8" y="424.8" width="1.6" height="1.6"/><rect x="1242.9" y="425.1" width="1.6" height="1.6"/><rect x="1046.3" y="424.4" width="1.6" height="1.6"/><rect x="1076.9" y="425.1" width="1.6" height="1.6"/><rect x="1344.4" y="420.5" width="1.6" height="1.6"/><rect x="886.8" y="421.2" width="1.6" height="1.6"/><rect x="1397.7" y="422.4" width="1.6" height="1.6"/><rect x="1189.0" y="421.7" width="1.6" height="1.6"/><rect x="1115.5" y="422.1" width="1.6" height="1.6"/><rect x="1019.2" y="423.2" width="1.6" height="1.6"/><rect x="1162.9" y="425.0" width="1.6" height="1.6"/><rect x="1223.1" y="425.1" width="1.6" height="1.6"/><rect x="1330.5" y="425.5" width="1.6" height="1.6"/><rect x="1216.5" y="420.9" width="1.6" height="1.6"/><rect x="1333.2" y="425.3" width="1.6" height="1.6"/><rect x="1360.3" y="423.1" width="1.6" height="1.6"/><rect x="1242.7" y="421.2" width="1.6" height="1.6"/><rect x="1315.3" y="423.2" width="1.6" height="1.6"/><rect x="978.5" y="420.3" width="1.6" height="1.6"/><rect x="1329.0" y="425.4" width="1.6" height="1.6"/><rect x="857.5" y="424.4" width="1.6" height="1.6"/><rect x="1055.8" y="420.8" width="1.6" height="1.6"/><rect x="984.0" y="424.2" width="1.6" height="1.6"/><rect x="1340.6" y="420.2" width="1.6" height="1.6"/><rect x="1181.6" y="420.2" width="1.6" height="1.6"/><rect x="1245.6" y="421.8" width="1.6" height="1.6"/><rect x="1345.6" y="425.4" width="1.6" height="1.6"/><rect x="1114.3" y="425.5" width="1.6" height="1.6"/><rect x="993.8" y="420.4" width="1.6" height="1.6"/><rect x="1172.5" y="420.2" width="1.6" height="1.6"/><rect x="924.6" y="422.2" width="1.6" height="1.6"/><rect x="1179.0" y="420.9" width="1.6" height="1.6"/><rect x="829.1" y="424.8" width="1.6" height="1.6"/><rect x="996.3" y="425.3" width="1.6" height="1.6"/><rect x="1355.3" y="422.1" width="1.6" height="1.6"/><rect x="1086.6" y="422.9" width="1.6" height="1.6"/><rect x="1199.6" y="423.3" width="1.6" height="1.6"/><rect x="1147.5" y="423.4" width="1.6" height="1.6"/><rect x="1382.4" y="422.8" width="1.6" height="1.6"/><rect x="1068.6" y="424.0" width="1.6" height="1.6"/><rect x="949.4" y="421.7" width="1.6" height="1.6"/><rect x="1405.3" y="422.9" width="1.6" height="1.6"/><rect x="1140.8" y="420.1" width="1.6" height="1.6"/><rect x="1058.8" y="423.2" width="1.6" height="1.6"/><rect x="815.4" y="423.4" width="1.6" height="1.6"/><rect x="1192.4" y="420.3" width="1.6" height="1.6"/><rect x="1189.4" y="422.6" width="1.6" height="1.6"/><rect x="1221.4" y="421.9" width="1.6" height="1.6"/><rect x="1238.5" y="424.1" width="1.6" height="1.6"/><rect x="816.7" y="420.3" width="1.6" height="1.6"/><rect x="1219.4" y="425.3" width="1.6" height="1.6"/><rect x="957.7" y="422.5" width="1.6" height="1.6"/><rect x="1168.1" y="421.8" width="1.6" height="1.6"/><rect x="1027.2" y="421.7" width="1.6" height="1.6"/><rect x="1030.4" y="423.3" width="1.6" height="1.6"/><rect x="988.0" y="422.1" width="1.6" height="1.6"/></g><g fill="none" stroke="#777" stroke-width="0.9"><circle cx="992.9" cy="239" r="3.6"/><circle cx="1003.5" cy="239" r="3.6"/><circle cx="1014.1" cy="239" r="3.6"/><circle cx="1101.6000000000001" cy="239" r="3.6"/><circle cx="1112.2" cy="239" r="3.6"/><circle cx="1122.8" cy="239" r="3.6"/><circle cx="1210.4" cy="239" r="3.6"/><circle cx="1221" cy="239" r="3.6"/><circle cx="1231.6" cy="239" r="3.6"/></g><g stroke="#666" stroke-width="1"><line x1="763.5" y1="175" x2="763.5" y2="427.8"/><line x1="758.5" y1="175.5" x2="768.5" y2="175.5"/><line x1="758.5" y1="205.5" x2="768.5" y2="205.5"/><line x1="758.5" y1="208.5" x2="768.5" y2="208.5"/><line x1="758.5" y1="223.5" x2="768.5" y2="223.5"/><line x1="758.5" y1="254.5" x2="768.5" y2="254.5"/><line x1="758.5" y1="403.5" x2="768.5" y2="403.5"/><line x1="758.5" y1="418.5" x2="768.5" y2="418.5"/><line x1="758.5" y1="427.5" x2="768.5" y2="427.5"/><line x1="865.2" y1="457.5" x2="1298.2" y2="457.5"/><line x1="865.5" y1="452.5" x2="865.5" y2="462.5"/><line x1="924.5" y1="452.5" x2="924.5" y2="462.5"/><line x1="1298.5" y1="452.5" x2="1298.5" y2="462.5"/></g><g font-family="Liberation Sans" font-size="14" fill="#8a8a8a"><text x="768.5" y="195">40</text><text x="768.5" y="221">20</text><text x="768.5" y="244.5">40</text><text x="768" y="333.8">200</text><text x="768.5" y="415.5">19</text><text transform="translate(756.5,301) rotate(-90)" text-anchor="middle">337,5</text><text x="895" y="473.5" text-anchor="middle">80</text><text x="1112" y="473.5" text-anchor="middle">500</text><text x="1112" y="169" text-anchor="middle">Außen</text><text x="1112" y="444.4" text-anchor="middle">Innen</text><text x="1356" y="443.3" fill="#c2c2c2">ubakus.de</text></g><g font-family="Liberation Sans" font-size="14" fill="#111"><circle cx="1092" cy="422.7" r="9.6" fill="#fff" stroke="#333" stroke-width="1"/><text x="1092" y="427.7" text-anchor="middle">1</text><circle cx="1111.7" cy="411.3" r="9.6" fill="#fff" stroke="#333" stroke-width="1"/><text x="1111.7" y="416.3" text-anchor="middle">2</text><circle cx="1131.7" cy="404" r="9.6" fill="#fff" stroke="#333" stroke-width="1"/><text x="1131.7" y="409" text-anchor="middle">3</text><circle cx="1131.7" cy="329" r="9.6" fill="#fff" stroke="#333" stroke-width="1"/><text x="1131.7" y="334" text-anchor="middle">4</text><circle cx="1132" cy="253.8" r="9.6" fill="#fff" stroke="#333" stroke-width="1"/><text x="1132" y="258.8" text-anchor="middle">5</text><circle cx="1152.4" cy="238.7" r="9.6" fill="#fff" stroke="#333" stroke-width="1"/><text x="1152.4" y="243.7" text-anchor="middle">6</text><circle cx="1152.4" cy="216.2" r="9.6" fill="#fff" stroke="#333" stroke-width="1"/><text x="1152.4" y="221.2" text-anchor="middle">7</text><circle cx="1172.2" cy="207.5" r="9.6" fill="#fff" stroke="#333" stroke-width="1"/><text x="1172.2" y="212.5" text-anchor="middle">8</text><circle cx="1192" cy="190" r="9.6" fill="#fff" stroke="#333" stroke-width="1"/><text x="1192" y="195" text-anchor="middle">9</text></g></svg><div class="lbl" style="left:28px;top:440px;">Außen:</div><div class="sel" style="left:73px;top:434px;width:270px;height:23px"><div class="v">Direkter Übergang zur Außenluft</div><div class="ar"></div></div><div class="inp" style="left:353px;top:434px;width:40px"><div class="v">-5</div></div><div class="lbl" style="left:396px;top:440px;">°C</div><div class="inp" style="left:422px;top:434px;width:40px"><div class="v">80</div></div><div class="lbl" style="left:466px;top:440px;">% Luftfeuchtigkeit</div><div class="btn" style="left:579px;top:434px;width:54px">Rse...</div><div class="lbl" style="left:524px;top:735px;color:#7d1a1a">Gewerbliche Nutzung nur mit kostenpflichtigem Zugang. <span style="color:#4f8a3a">Weitere Infos</span></div><div id="panel" class="a"></div><div id="pbot" class="a"></div><div class="a" style="left:187px;top:770.2px;font-size:20.5px;line-height:1;color:#efefef;white-space:nowrap">U-Wert:</div><div class="a" style="left:265px;top:766.0px;font-size:25.5px;line-height:1;color:#efefef;white-space:nowrap">0,228</div><div class="a" style="left:334px;top:775.9px;font-size:13.8px;line-height:1;color:#efefef;white-space:nowrap">W/m²K</div><svg class="a" style="left:398px;top:772px" width="20" height="20" viewBox="0 0 20 20"><path d="M3.5,2.2 A5,5 0 0 0 9.6,8.8 L16.6,15.8 A1.6,1.6 0 0 0 18.8,13.6 L11.8,6.6 A5,5 0 0 0 5.2,0.6 L8.2,3.6 L7.4,5.8 L5.2,6.6 Z" fill="#b5b5b5"/></svg><div class="a" style="left:187px;top:801px;width:232px;height:10.7px;background:#505152;border-top:1px solid #404040;border-right:1px solid #9c9c9c"></div><div class="a" style="left:187px;top:811.7px;width:232px;height:4.8px;background:linear-gradient(to right,#8a9b76 0,#8a9b76 56px,#8a3232 58px,#8a3232);border-right:1px solid #9c9c9c"><div style="position:absolute;left:0;top:0;width:100%;height:1px;background:rgba(255,255,255,.22)"></div><div style="position:absolute;left:0;bottom:0;width:100%;height:1px;background:rgba(255,255,255,.3)"></div></div><div class="a" style="left:187px;top:801px;width:53px;height:12.2px;background:linear-gradient(#a9d982,#8cc75a 35%,#88c455);border:1px solid #33402a;box-shadow:inset 0 1px rgba(255,255,255,.3)"></div><div class="a" style="left:187px;top:823.0px;font-size:13px;line-height:1;color:#efefef;white-space:nowrap">EnEV Bestand: U ≤ 0.24*</div><div class="a" style="left:338px;top:821.5px;width:15px;height:15px;background:#cfcfcf"><div style="position:absolute;left:3px;top:4px;border-left:4.5px solid transparent;border-right:4.5px solid transparent;border-top:8px solid #3a3a3a"></div></div><div class="a" style="left:187px;top:849.7px;font-size:13px;line-height:1;color:#efefef;white-space:nowrap">PEI n.e.: &gt;83 kWh/m²</div><div class="a" style="left:187px;top:866px;width:232px;height:7px;background:#505152;border-top:1px solid #404040;border-right:1px solid #9c9c9c"></div><div class="a" style="left:187px;top:873px;width:232px;height:5px;background:linear-gradient(to right,#8a9b76 0,#8a9b76 28%,#c9a04a 58%,#b0703a 75%,#8a3232 92%);border-right:1px solid #9c9c9c"><div style="position:absolute;left:0;top:0;width:100%;height:1px;background:rgba(255,255,255,.22)"></div><div style="position:absolute;left:0;top:1px;width:100%;height:1px;background:rgba(0,0,0,.55)"></div></div><div class="a" style="left:187px;top:866px;width:58px;height:8.5px;background:linear-gradient(#a9d982,#8cc75a 35%,#88c455);border:1px solid #33402a;box-shadow:inset 0 1px rgba(255,255,255,.3)"></div><div class="a" style="left:187px;top:885.8px;font-size:12px;line-height:1;color:#bdbdbd;white-space:nowrap">sehr gut</div><div class="a" style="right:1000.5px;top:885.8px;font-size:12px;line-height:1;color:#bdbdbd;white-space:nowrap">mangelhaft</div><div class="a" style="left:439px;top:770.0px;font-size:13px;line-height:1;color:#efefef;white-space:nowrap">Tauwasser: 0 kg/m²</div><div class="a" style="left:439.5px;top:786.5px;width:232px;height:6.8px;background:#505152;border-top:1px solid #404040;border-right:1px solid #9c9c9c"></div><div class="a" style="left:439.5px;top:793.3px;width:232px;height:4.8px;background:linear-gradient(to right,#8a9b76 0,#8a9b76 48%,#c4b24e 72%,#a65a3a 85%,#8a3232 93%);border-right:1px solid #9c9c9c"><div style="position:absolute;left:0;top:0;width:100%;height:1px;background:rgba(255,255,255,.22)"></div><div style="position:absolute;left:0;top:1px;width:100%;height:1px;background:rgba(0,0,0,.55)"></div></div><div class="a" style="left:439.5px;top:786.5px;width:2.5px;height:8.3px;background:linear-gradient(#a9d982,#8cc75a 35%,#88c455);border:1px solid #33402a;box-shadow:inset 0 1px rgba(255,255,255,.3)"></div><div class="a" style="left:439px;top:810.0px;font-size:13px;line-height:1;color:#efefef;white-space:nowrap">Holzfeuchte: +0,0 %</div><div class="a" style="left:439.5px;top:826.3px;width:232px;height:6.8px;background:#505152;border-top:1px solid #404040;border-right:1px solid #9c9c9c"></div><div class="a" style="left:439.5px;top:833.0999999999999px;width:232px;height:4.8px;background:linear-gradient(to right,#8a9b76 0,#8a9b76 20%,#c4b24e 31%,#a04a34 40%,#8a3232 47%);border-right:1px solid #9c9c9c"><div style="position:absolute;left:0;top:0;width:100%;height:1px;background:rgba(255,255,255,.22)"></div><div style="position:absolute;left:0;top:1px;width:100%;height:1px;background:rgba(0,0,0,.55)"></div></div><div class="a" style="left:439.5px;top:826.3px;width:2.5px;height:8.3px;background:linear-gradient(#a9d982,#8cc75a 35%,#88c455);border:1px solid #33402a;box-shadow:inset 0 1px rgba(255,255,255,.3)"></div><div class="a" style="left:439px;top:850.0px;font-size:13px;line-height:1;color:#efefef;white-space:nowrap">Trocknungsdauer: -</div><div class="a" style="left:439.5px;top:866.3px;width:232px;height:6.8px;background:#505152;border-top:1px solid #404040;border-right:1px solid #9c9c9c"></div><div class="a" style="left:439.5px;top:873.0999999999999px;width:232px;height:4.8px;background:linear-gradient(to right,#8a9b76 0,#8a9b76 33%,#c4b24e 48%,#c0a048 72%,#8a3232 92%);border-right:1px solid #9c9c9c"><div style="position:absolute;left:0;top:0;width:100%;height:1px;background:rgba(255,255,255,.22)"></div><div style="position:absolute;left:0;top:1px;width:100%;height:1px;background:rgba(0,0,0,.55)"></div></div><div class="a" style="left:439.5px;top:866.3px;width:2.5px;height:8.3px;background:linear-gradient(#a9d982,#8cc75a 35%,#88c455);border:1px solid #33402a;box-shadow:inset 0 1px rgba(255,255,255,.3)"></div><div class="a" style="left:439px;top:885.8px;font-size:12px;line-height:1;color:#bdbdbd;white-space:nowrap">sehr gut</div><div class="a" style="right:748.5px;top:885.8px;font-size:12px;line-height:1;color:#bdbdbd;white-space:nowrap">mangelhaft</div><div class="a" style="left:691px;top:770.0px;font-size:13px;line-height:1;color:#efefef;white-space:nowrap">sd-Wert: 5,8 m</div><div class="a" style="right:496.5px;top:770.0px;font-size:13px;line-height:1;color:#efefef;white-space:nowrap">Dicke: 33,75 cm</div><div class="a" style="right:496.5px;top:787.5px;font-size:13px;line-height:1;color:#efefef;white-space:nowrap">Gewicht: 115 kg/m²</div><div class="a" style="left:691px;top:807.6px;font-size:13px;line-height:1;color:#efefef;white-space:nowrap">Oberfläche innen: 17,8°C (57%)</div><div class="a" style="left:691.5px;top:823.8px;width:231.5px;height:7px;background:#505152;border-top:1px solid #404040;border-right:1px solid #9c9c9c"></div><div class="a" style="left:691.5px;top:830.8px;width:231.5px;height:4.8px;background:linear-gradient(to right,#8a3232 0,#8a3232 13%,#c4b24e 22%,#8a9b76 32%,#8a9b76);border-right:1px solid #9c9c9c"><div style="position:absolute;left:0;top:0;width:100%;height:1px;background:rgba(255,255,255,.22)"></div><div style="position:absolute;left:0;top:1px;width:100%;height:1px;background:rgba(0,0,0,.55)"></div></div><div class="a" style="left:691.5px;top:823.8px;width:98.5px;height:8.5px;background:linear-gradient(#a9d982,#8cc75a 35%,#88c455);border:1px solid #33402a;box-shadow:inset 0 1px rgba(255,255,255,.3)"></div><div class="a" style="left:691px;top:848.0px;font-size:13px;line-height:1;color:#efefef;white-space:nowrap">Trocknungsreserve: 9047 g/m²a</div><div class="a" style="left:691.5px;top:864px;width:231.5px;height:7px;background:#505152;border-top:1px solid #404040;border-right:1px solid #9c9c9c"></div><div class="a" style="left:691.5px;top:871px;width:231.5px;height:4.8px;background:linear-gradient(to right,#8a3232 0,#8a3232 43%,#c4b24e 52%,#8a9b76 60%,#8a9b76);border-right:1px solid #9c9c9c"><div style="position:absolute;left:0;top:0;width:100%;height:1px;background:rgba(255,255,255,.22)"></div><div style="position:absolute;left:0;top:1px;width:100%;height:1px;background:rgba(0,0,0,.55)"></div></div><div class="a" style="left:691.5px;top:864px;width:231.5px;height:8.5px;background:linear-gradient(#a9d982,#8cc75a 35%,#88c455);border:1px solid #33402a;box-shadow:inset 0 1px rgba(255,255,255,.3)"></div><div class="a" style="left:691px;top:883.5px;font-size:12px;line-height:1;color:#bdbdbd;white-space:nowrap">mangelhaft</div><div class="a" style="right:496.5px;top:883.5px;font-size:12px;line-height:1;color:#bdbdbd;white-space:nowrap">sehr gut</div><div class="a" style="left:943px;top:770.0px;font-size:13px;line-height:1;color:#efefef;white-space:nowrap">Temp.Ampl.Dämpfung (1/TAV): 3,7</div><div class="a" style="left:943.5px;top:786.6px;width:231.5px;height:7px;background:#505152;border-top:1px solid #404040;border-right:1px solid #9c9c9c"></div><div class="a" style="left:943.5px;top:793.6px;width:231.5px;height:4.8px;background:linear-gradient(to right,#8a3232 0,#8a3232 6%,#c4b24e 18%,#8a9b76 34%,#8a9b76);border-right:1px solid #9c9c9c"><div style="position:absolute;left:0;top:0;width:100%;height:1px;background:rgba(255,255,255,.22)"></div><div style="position:absolute;left:0;top:1px;width:100%;height:1px;background:rgba(0,0,0,.55)"></div></div><div class="a" style="left:943.5px;top:786.6px;width:44px;height:8.5px;background:linear-gradient(#dede70,#cfcf3a 35%,#c9c935);border:1px solid #33402a;box-shadow:inset 0 1px rgba(255,255,255,.3)"></div><div class="a" style="left:943px;top:810.0px;font-size:13px;line-height:1;color:#efefef;white-space:nowrap">Phasenverschiebung: 5,8 h</div><div class="a" style="left:943.5px;top:826.9px;width:231.5px;height:6.6px;background:#505152;border-top:1px solid #404040;border-right:1px solid #9c9c9c"></div><div class="a" style="left:943.5px;top:833.5px;width:231.5px;height:4.8px;background:linear-gradient(to right,#8a3232 0,#8a3232 5%,#c4b24e 16%,#8a9b76 32%,#8a9b76);border-right:1px solid #9c9c9c"><div style="position:absolute;left:0;top:0;width:100%;height:1px;background:rgba(255,255,255,.22)"></div><div style="position:absolute;left:0;top:1px;width:100%;height:1px;background:rgba(0,0,0,.55)"></div></div><div class="a" style="left:943.5px;top:826.9px;width:74px;height:8.1px;background:linear-gradient(#dede70,#cfcf3a 35%,#c9c935);border:1px solid #33402a;box-shadow:inset 0 1px rgba(255,255,255,.3)"></div><div class="a" style="left:943px;top:850.0px;font-size:13px;line-height:1;color:#efefef;white-space:nowrap">Speicherfähigkeit innen: 18.4 kJ/m²K</div><div class="a" style="left:943.5px;top:867.1px;width:231.5px;height:6.6px;background:#505152;border-top:1px solid #404040;border-right:1px solid #9c9c9c"></div><div class="a" style="left:943.5px;top:873.7px;width:231.5px;height:4.8px;background:linear-gradient(to right,#8a3232 0,#8a3232 6%,#c4b24e 18%,#8a9b76 34%,#8a9b76);border-right:1px solid #9c9c9c"><div style="position:absolute;left:0;top:0;width:100%;height:1px;background:rgba(255,255,255,.22)"></div><div style="position:absolute;left:0;top:1px;width:100%;height:1px;background:rgba(0,0,0,.55)"></div></div><div class="a" style="left:943.5px;top:867.1px;width:43px;height:8.1px;background:linear-gradient(#e8b850,#dba22c 35%,#d59a28);border:1px solid #33402a;box-shadow:inset 0 1px rgba(255,255,255,.3)"></div><div class="a" style="left:943px;top:885.8px;font-size:12px;line-height:1;color:#bdbdbd;white-space:nowrap">mangelhaft</div><div class="a" style="right:244.4000000000001px;top:885.8px;font-size:12px;line-height:1;color:#bdbdbd;white-space:nowrap">sehr gut</div></body></html>
